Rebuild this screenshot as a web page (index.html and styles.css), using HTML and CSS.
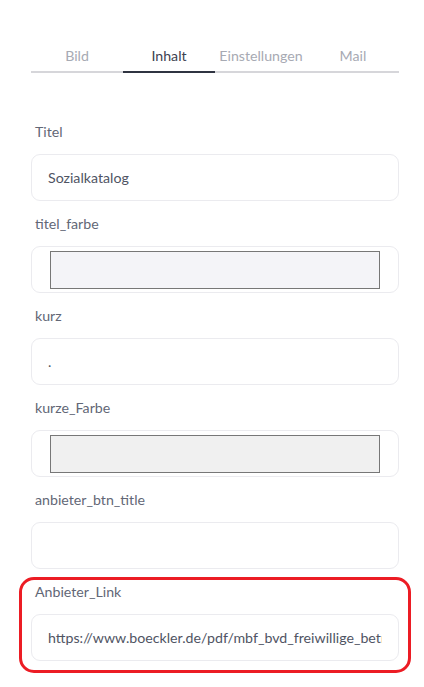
FILE: index.html
```html
<!DOCTYPE html>
<html lang="de">
<head>
<meta charset="utf-8">
<link rel="stylesheet" href="styles.css">
</head>
<body>
<div class="page">
  <nav class="tabs">
    <div class="tab">Bild</div>
    <div class="tab active">Inhalt</div>
    <div class="tab">Einstellungen</div>
    <div class="tab">Mail</div>
  </nav>
  <form class="form">
    <div class="field">
      <div class="label">Titel</div>
      <div class="box"><span class="value">Sozialkatalog</span></div>
    </div>
    <div class="field">
      <div class="label">titel_farbe</div>
      <div class="box"><div class="swatch swatch-a"></div></div>
    </div>
    <div class="field">
      <div class="label">kurz</div>
      <div class="box"><span class="value">.</span></div>
    </div>
    <div class="field">
      <div class="label">kurze_Farbe</div>
      <div class="box"><div class="swatch swatch-b"></div></div>
    </div>
    <div class="field">
      <div class="label">anbieter_btn_title</div>
      <div class="box"><span class="value"></span></div>
    </div>
    <div class="field highlight">
      <div class="label">Anbieter_Link</div>
      <div class="box"><span class="value clip">https://www.boeckler.de/pdf/mbf_bvd_freiwillige_betriebliche_leistungen.pdf</span></div>
    </div>
  </form>
</div>
</body>
</html>
```

FILE: styles.css
```css
html, body {
  margin: 0;
  padding: 0;
  background: #ffffff;
}
body {
  font-family: "Lato", "Noto Sans", sans-serif;
  font-size: 14.2px;
  color: #5f6472;
}
.page {
  width: 368px;
  padding-left: 31px;
}
.tabs {
  display: grid;
  grid-template-columns: repeat(4, 1fr);
  margin-top: 46px;
}
.tab {
  text-align: center;
  line-height: 20px;
  padding-bottom: 5px;
  border-bottom: 2px solid #d6d6da;
  color: #a7aab3;
}
.tab.active {
  color: #3d4250;
  border-bottom-color: #2f3441;
}
.form {
  margin-top: 49px;
  display: flex;
  flex-direction: column;
}
.field {
  display: flex;
  flex-direction: column;
  margin-bottom: 13px;
}
.label {
  line-height: 20px;
  padding-left: 4px;
  margin-bottom: 12px;
  color: #626776;
}
.box {
  height: 47px;
  box-sizing: border-box;
  border: 1px solid #ebebef;
  border-radius: 9px;
  display: flex;
  align-items: center;
  padding: 0 16px 0 16px;
  overflow: hidden;
}
.value {
  color: #4f5463;
  line-height: 20px;
  white-space: nowrap;
}
.clip {
  overflow: hidden;
  text-overflow: clip;
  display: block;
  width: 100%;
}
.swatch {
  flex: 1;
  height: 38px;
  box-sizing: border-box;
  border: 1px solid #777777;
  margin: 0 2px;
}
.swatch-a { background: #f4f4f8; }
.swatch-b { background: #f0f0f0; }
.highlight {
  margin: -5px -12px 0 -12px;
  padding: 2px 9px 9px 9px;
  border: 3px solid #ec1c24;
  border-radius: 15px;
}
```
